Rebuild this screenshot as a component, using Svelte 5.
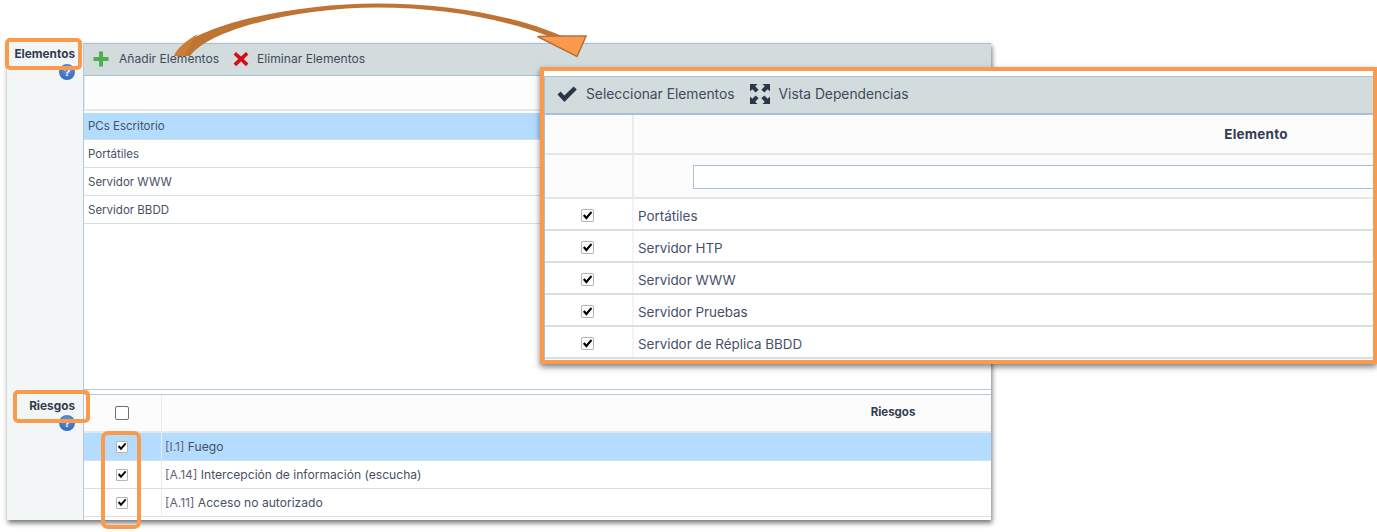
<script>
  const elementos = ['PCs Escritorio', 'Portátiles', 'Servidor WWW', 'Servidor BBDD'];
  const riesgos = [
    ['[I.1]', 'Fuego'],
    ['[A.14]', 'Intercepción de información (escucha)'],
    ['[A.11]', 'Acceso no autorizado'],
  ];
  const seleccion = ['Portátiles', 'Servidor HTP', 'Servidor WWW', 'Servidor Pruebas', 'Servidor de Réplica BBDD'];
</script>

{#snippet checkbox()}
  <span class="check">
    <svg viewBox="0 0 12 12" width="11" height="11"><path d="M1 6.2 L2.9 4.6 L4.8 6.8 L9.6 1.4 L11.2 3 L4.8 10.6 Z" fill="#000" /></svg>
  </span>
{/snippet}

{#snippet help()}
  <span class="help">?</span>
{/snippet}

<div class="stage">
  <div class="window">
    <section class="top">
      <div class="side">
        <span class="side-label">Elementos</span>
        {@render help()}
      </div>
      <div class="main">
        <div class="toolbar">
          <button class="tool first">
            <svg viewBox="0 0 16 16" width="16" height="16"><path d="M6 0.5h4v5.5h5.5v4H10v5.5H6V10H0.5V6H6z" fill="#4caf50" /></svg>
            Añadir Elementos
          </button>
          <button class="tool second">
            <svg viewBox="0 0 16 16" width="16" height="16"><path d="M3 1l5 4.4L13 1l2.4 2.4L10.8 8l4.6 4.6L13 15.2 8 10.6l-5 4.6-2.4-2.6L5.2 8 .6 3.4z" fill="#d40d1c" /></svg>
            Eliminar Elementos
          </button>
        </div>
        <div class="filter"></div>
        <div class="list">
          {#each elementos as el, i}
            <div class="row" class:selected={i === 0}>{el}</div>
          {/each}
        </div>
      </div>
    </section>

    <section class="bottom">
      <div class="side">
        <span class="side-label">Riesgos</span>
        {@render help()}
      </div>
      <div class="main">
        <div class="risk-head">
          <div class="risk-check"><span class="check empty"></span></div>
          <div class="risk-title">Riesgos</div>
        </div>
        {#each riesgos as r, i}
          <div class="risk-row" class:selected={i === 0}>
            <div class="risk-check">{@render checkbox()}</div>
            <div class="risk-text"><span class="code">{r[0]}</span> {r[1]}</div>
          </div>
        {/each}
      </div>
    </section>
  </div>

  <div class="panel">
    <div class="panel-inner">
      <div class="toolbar panel-toolbar">
        <button class="tool">
          <svg viewBox="0 0 20 16" width="20" height="16"><path d="M0.5 8.5L3.5 5.6 7.4 9.6 16.6 0.5 19.8 3.5 7.4 16z" fill="#2b3647" /></svg>
          Seleccionar Elementos
        </button>
        <button class="tool">
          <svg viewBox="0 0 20 20" width="20" height="20" fill="#2b3647">
            <path d="M0 0h7.5L5.2 2.3 8.6 5.7 5.7 8.6 2.3 5.2 0 7.5z" />
            <path d="M20 0h-7.5l2.3 2.3-3.4 3.4 2.9 2.9 3.4-3.4L20 7.5z" />
            <path d="M0 20h7.5l-2.3-2.3 3.4-3.4-2.9-2.9-3.4 3.4L0 12.5z" />
            <path d="M20 20h-7.5l2.3-2.3-3.4-3.4 2.9-2.9 3.4 3.4 2.3-2.3z" />
          </svg>
          Vista Dependencias
        </button>
      </div>
      <div class="panel-row head">
        <div class="cell-check"></div>
        <div class="cell-title">Elemento</div>
      </div>
      <div class="panel-row search">
        <div class="cell-check"></div>
        <div class="cell-search"><input type="text" /></div>
      </div>
      {#each seleccion as s}
        <div class="panel-row item">
          <div class="cell-check">{@render checkbox()}</div>
          <div class="cell-text">{s}</div>
        </div>
      {/each}
    </div>
  </div>

  <span class="mark mark-elementos"></span>
  <span class="mark mark-riesgos"></span>
  <span class="mark mark-checks"></span>

  <svg class="arrow" viewBox="0 0 600 70" width="600" height="70">
    <path d="M174 56 C186 27 290 3.5 377 3.5 C450 3.5 515 16 562 36 L548 36 C500 18 440 7.5 377 7.5 C305 7.5 212 27 190 56 Z" fill="#bd7434" />
    <path d="M174 56 C178 47 187 40 198 34 C192 41 188 48 185 56 Z" fill="#cb7d38" />
    <path d="M537.5 36.5 L555 36 L586 36 L577 56.5 Z" fill="#fa9a4c" stroke="#b8713a" stroke-width="1.6" />
  </svg>
</div>

<style>
  :global(body) { background: #fff; }
  * { box-sizing: border-box; }
  .stage { position: relative; width: 1377px; height: 532px; overflow: hidden; padding: 43px 0 0 7px; font-family: Inter, "Open Sans", sans-serif; font-size: 11.5px; color: #465066; }

  .window { width: 984px; height: 477px; box-shadow: 1px 3px 5px rgba(0, 0, 0, 0.55); background: #fff; display: flex; flex-direction: column; }
  section { display: flex; overflow: hidden; }
  .top { height: 349px; }
  .bottom { height: 128px; }
  .side { width: 77px; flex: none; background: #f2f6f7; border-right: 1px solid #b7cadb; display: flex; flex-direction: column; align-items: flex-end; }
  .side-label { font-weight: 700; font-size: 11.8px; line-height: 15px; color: #333c4e; margin: 4px 8px 0 0; }
  .bottom .side-label { margin-top: 7px; }
  .help { width: 16px; height: 16px; margin: 1px 8px 0 0; border-radius: 50%; background: radial-gradient(circle at 50% 30%, #5f93dc, #2a62b4); color: #fff; font: 700 11px/16px "Liberation Sans", sans-serif; text-align: center; }
  .top .help { margin-top: 2px; }
  .main { flex: 1; min-width: 0; overflow: hidden; }

  .toolbar { height: 33px; padding-bottom: 2px; background: #d3dcdd; border-top: 1px solid #a8c0d8; border-bottom: 1px solid #a8c0d8; display: flex; align-items: center; font-size: 12.1px; }
  .tool { display: flex; align-items: center; gap: 10px; border: none; background: none; padding: 0; font: inherit; color: #3f4a5c; white-space: nowrap; }
  .first { margin: 0 14px 0 9px; }
  .second { gap: 8px; }
  .filter { height: 35px; background: #fdfdfd; border-left: 1px solid #e3e8e8; border-bottom: 2px solid #e3e8e8; margin-bottom: 2px; }
  .row { height: 28px; line-height: 29px; padding-left: 4px; border-bottom: 1px solid #d6e0e3; }
  .row:first-child { height: 27px; line-height: 27px; }
  .row.selected, .risk-row.selected { background: #b3dcff; }
  .list { height: 277px; border-bottom: 1px solid #b2c9dd; }

  .bottom .main { padding-top: 2px; }
  .risk-head { display: flex; height: 39px; border-top: 1px solid #b7cadb; border-bottom: 2px solid #e3e8e8; background: #fcfcfc; }
  .risk-check { width: 78px; flex: none; display: flex; justify-content: center; align-items: center; border-right: 1px solid #e8eced; padding-right: 1px; }
  .risk-title { width: 1462px; flex: none; text-align: center; font-weight: 700; font-size: 11.5px; line-height: 35px; color: #333c4e; }
  .risk-row { display: flex; height: 28px; border-bottom: 1px solid #d6e0e3; }
  .risk-text { padding-left: 3px; line-height: 28px; white-space: nowrap; font-size: 12.1px; }
  .code { color: #6a5f78; }

  .check { width: 12px; height: 12px; border: 1px solid #b5b5b5; border-radius: 1px; background: #fff; display: flex; align-items: center; justify-content: center; }
  .check.empty { width: 14px; height: 14px; border-color: #6f6f6f; border-radius: 2px; }

  .panel { position: absolute; left: 540px; top: 67px; width: 837px; height: 297px; border: 4px solid #fa9a4c; background: #fff; box-shadow: 0 3px 6px rgba(0, 0, 0, 0.5); padding-top: 5px; }
  .panel-inner { height: 100%; overflow: hidden; border-left: 1px solid #a8c0d8; font-size: 13.4px; }
  .panel-toolbar { height: 39px; border-bottom-width: 2px; padding-left: 12px; gap: 15px; font-size: 13.8px; }
  .panel-toolbar .tool { gap: 9px; }
  .panel-row { display: flex; border-bottom: 2px solid #e2e8e9; }
  .cell-check { width: 89px; flex: none; display: flex; justify-content: center; align-items: center; border-right: 2px solid #e8eced; background: #fcfcfc; }
  .head { height: 40px; background: #fcfcfc; }
  .cell-title { width: 1244px; flex: none; text-align: center; font-weight: 700; font-size: 13.5px; letter-spacing: 0.2px; line-height: 38px; color: #333c4e; }
  .search { height: 44px; }
  .cell-search { flex: 1; padding: 10px 0 0 59px; background: #fcfcfc; }
  .cell-search input { display: block; width: 800px; height: 24px; border: 1px solid #a8c0d8; background: #fff; margin: 0; padding: 0; }
  .item { height: 32px; border-bottom-color: #d6e0e3; }
  .item .cell-check { background: #fff; border-right-color: #f2f4f5; padding-top: 3px; }
  .item .check { width: 13px; height: 13px; margin-right: 2px; }
  .cell-text { padding-left: 4px; line-height: 34px; white-space: nowrap; }

  .mark { position: absolute; border: 4px solid #fa9a4c; border-radius: 5px; }
  .mark-elementos { left: 5px; top: 38px; width: 77px; height: 32px; }
  .mark-riesgos { left: 13px; top: 390px; width: 77px; height: 33px; }
  .mark-checks { left: 101px; top: 431px; width: 40px; height: 98px; border-radius: 7px; }
  .arrow { position: absolute; left: 0; top: 0; }
</style>
